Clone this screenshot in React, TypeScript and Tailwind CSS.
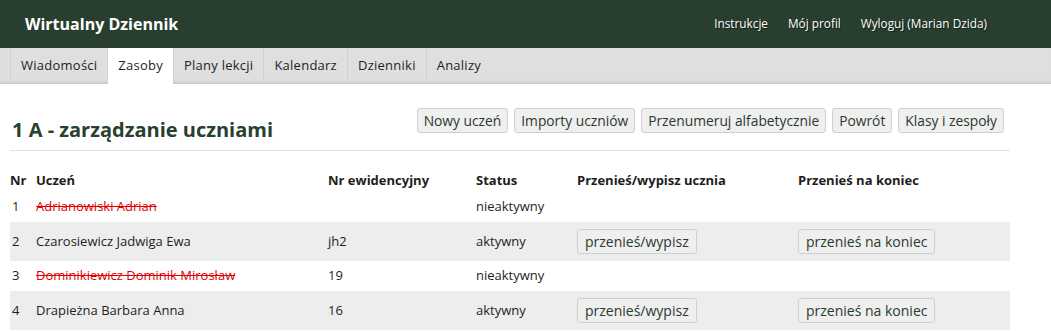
import React from "react";

type Student = {
  nr: number;
  name: string;
  ewid: string;
  active: boolean;
};

const students: Student[] = [
  { nr: 1, name: "Adrianowiski Adrian", ewid: "", active: false },
  { nr: 2, name: "Czarosiewicz Jadwiga Ewa", ewid: "jh2", active: true },
  { nr: 3, name: "Dominikiewicz Dominik Mirosław", ewid: "19", active: false },
  { nr: 4, name: "Drapieżna Barbara Anna", ewid: "16", active: true },
];

const tabs = ["Wiadomości", "Zasoby", "Plany lekcji", "Kalendarz", "Dzienniki", "Analizy"];

const actions = [
  "Nowy uczeń",
  "Importy uczniów",
  "Przenumeruj alfabetycznie",
  "Powrót",
  "Klasy i zespoły",
];

function GrayButton({ children, wide }: { children: React.ReactNode; wide?: boolean }) {
  return (
    <button
      className={
        "h-[25px] rounded-[3px] border border-[#cfcfcf] bg-[#efefef] leading-[23px] text-[#2a3a2e] " +
        (wide ? "px-[7px] text-[14px]" : "px-[6px] text-[13.8px]")
      }
    >
      {children}
    </button>
  );
}

export default function App() {
  return (
    <div className="min-h-screen bg-white font-['Open_Sans','Liberation_Sans',sans-serif] text-[13px] text-[#1e1e1e]">
      {/* top bar */}
      <header className="flex h-12 items-center justify-between bg-[#283f2f] pl-[25px] pr-[64px]">
        <span className="text-[16px] font-bold text-white">Wirtualny Dziennik</span>
        <nav className="flex gap-[20px] text-[11.8px] text-white [text-shadow:1px_1px_1px_rgba(0,0,0,0.6)]">
          <a>Instrukcje</a>
          <a>Mój profil</a>
          <a>Wyloguj (Marian Dzida)</a>
        </nav>
      </header>

      {/* tabs */}
      <div className="flex h-9 bg-[#dfdfdf] pl-[10px] shadow-[inset_0_-4px_3px_-2px_rgba(0,0,0,0.1)]">
        {tabs.map((t) => (
          <div
            key={t}
            className={
              t === "Zasoby"
                ? "flex items-center border-l border-[#d2d2d2] bg-white px-[10px] tracking-[0.25px]"
                : "flex items-center border-l border-[#d2d2d2] px-[10px] tracking-[0.25px]"
            }
          >
            {t}
          </div>
        ))}
      </div>

      <main className="ml-[10px] w-[1000px]">
        <div className="flex items-start justify-between pt-[24px]">
          <h1 className="pl-[2px] pt-[7px] text-[20px] font-bold leading-[30px] text-[#29402f]">
            1 A - zarządzanie uczniami
          </h1>
          <div className="mr-[6px] flex gap-[6px]">
            {actions.map((a) => (
              <GrayButton key={a}>{a}</GrayButton>
            ))}
          </div>
        </div>
        <hr className="mt-[5px] border-[#e2e2e2]" />

        <table className="mt-[11px] w-full border-collapse text-left">
          <thead>
            <tr className="h-[30px] align-bottom font-bold">
              <th className="w-[26px] pb-[2px]">Nr</th>
              <th className="w-[292px] pb-[2px]">Uczeń</th>
              <th className="w-[148px] pb-[2px]">Nr ewidencyjny</th>
              <th className="w-[101px] pb-[2px]">Status</th>
              <th className="w-[221px] pb-[2px]">Przenieś/wypisz ucznia</th>
              <th className="pb-[2px]">Przenieś na koniec</th>
            </tr>
          </thead>
          <tbody>
            {students.map((s, i) => (
              <tr
                key={s.nr}
                className={
                  (i % 2 === 1 ? "bg-[#ededed] " : "") +
                  (s.active ? "h-[39px]" : "h-[30px]")
                }
              >
                <td className="pl-[2px]">{s.nr}</td>
                <td>
                  {s.active ? (
                    s.name
                  ) : (
                    <span className="text-[#e00000] line-through">{s.name}</span>
                  )}
                </td>
                <td>{s.ewid}</td>
                <td>{s.active ? "aktywny" : "nieaktywny"}</td>
                <td>{s.active && <GrayButton wide>przenieś/wypisz</GrayButton>}</td>
                <td>{s.active && <GrayButton wide>przenieś na koniec</GrayButton>}</td>
              </tr>
            ))}
          </tbody>
        </table>
      </main>
    </div>
  );
}
